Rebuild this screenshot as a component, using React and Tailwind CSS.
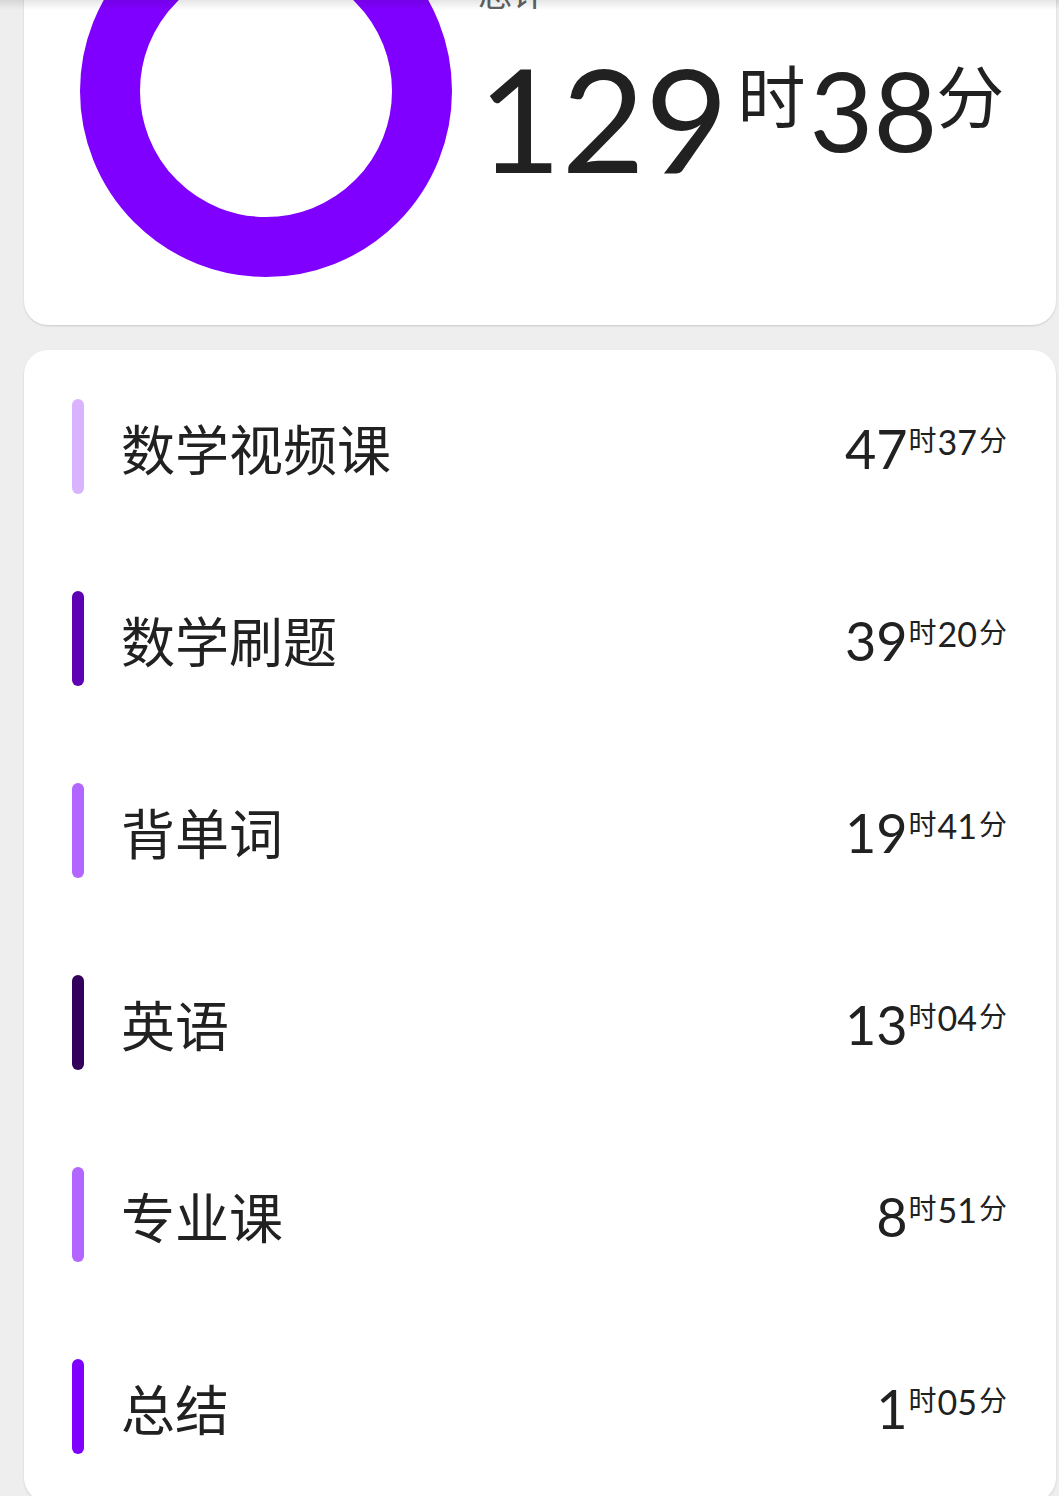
import React from 'react';

const LATO = { fontFamily: 'Lato, "Noto Sans CJK SC", sans-serif' };

const items = [
    { name: '数学视频课', h: '47', m: '37', color: 'bg-[#dab3ff]' },
    { name: '数学刷题', h: '39', m: '20', color: 'bg-[#5e00b3]' },
    { name: '背单词', h: '19', m: '41', color: 'bg-[#b366ff]' },
    { name: '英语', h: '13', m: '04', color: 'bg-[#33005c]' },
    { name: '专业课', h: '8', m: '51', color: 'bg-[#b366ff]' },
    { name: '总结', h: '1', m: '05', color: 'bg-[#8000ff]' },
];

const Donut = () => (
    <svg width="372" height="372" viewBox="0 0 372 372" className="shrink-0">
        <circle cx="186" cy="186" r="156" fill="none" stroke="#8000ff" strokeWidth="60" />
    </svg>
);

const Row = ({ item }) => (
    <div className="flex items-center h-[192px] pl-12 pr-[49px]">
        <div className={`w-3 h-[95px] rounded-full shrink-0 ${item.color}`} />
        <div className="ml-[37px] flex-1 text-[54px] leading-none text-[#212121] font-['Noto_Sans_CJK_SC',sans-serif] mt-[4px]">
            {item.name}
        </div>
        <div className="flex items-start text-[#212121] mt-[6px]" style={LATO}>
            <span className="text-[54px] leading-none">{item.h}</span>
            <span className="text-[28px] leading-none mt-[3px] ml-[1px] font-['Noto_Sans_CJK_SC',sans-serif]">时</span>
            <span className="text-[34px] leading-none mt-[3px] ml-[1px]">{item.m}</span>
            <span className="text-[28px] leading-none mt-[3px] ml-[2px] font-['Noto_Sans_CJK_SC',sans-serif]">分</span>
        </div>
    </div>
);

export default function App() {
    return (
        <div className="relative h-[1496px] overflow-hidden bg-[#eeeeee] pl-6 pr-[3px]">
            {/* toolbar shadow */}
            <div className="absolute top-0 left-0 right-0 h-[10px] bg-gradient-to-b from-black/10 to-transparent z-10" />

            <div className="mt-[-143px] bg-white rounded-3xl shadow-[0_1px_2px_rgba(0,0,0,0.15)] pl-14 pt-12 pb-12 flex items-start">
                <Donut />
                <div className="ml-[26px] flex flex-col text-[#212121]" style={LATO}>
                    <div className="text-[34px] leading-none text-[#616161] mt-[70px] font-['Noto_Sans_CJK_SC',sans-serif]">总计</div>
                    <div className="flex items-start mt-[37px]">
                        <span className="text-[144px] leading-none">129</span>
                        <span className="text-[68px] leading-none mt-[14px] ml-[9px] font-['Noto_Sans_CJK_SC',sans-serif]">时</span>
                        <span className="text-[110px] leading-none mt-[8px] ml-[4px]">38</span>
                        <span className="text-[68px] leading-none mt-[14px] ml-[-1px] font-['Noto_Sans_CJK_SC',sans-serif]">分</span>
                    </div>
                </div>
            </div>

            <div className="mt-[25px] bg-white rounded-3xl shadow-[0_1px_2px_rgba(0,0,0,0.15)]">
                {items.map(item => (
                    <Row key={item.name} item={item} />
                ))}
            </div>
        </div>
    );
}
